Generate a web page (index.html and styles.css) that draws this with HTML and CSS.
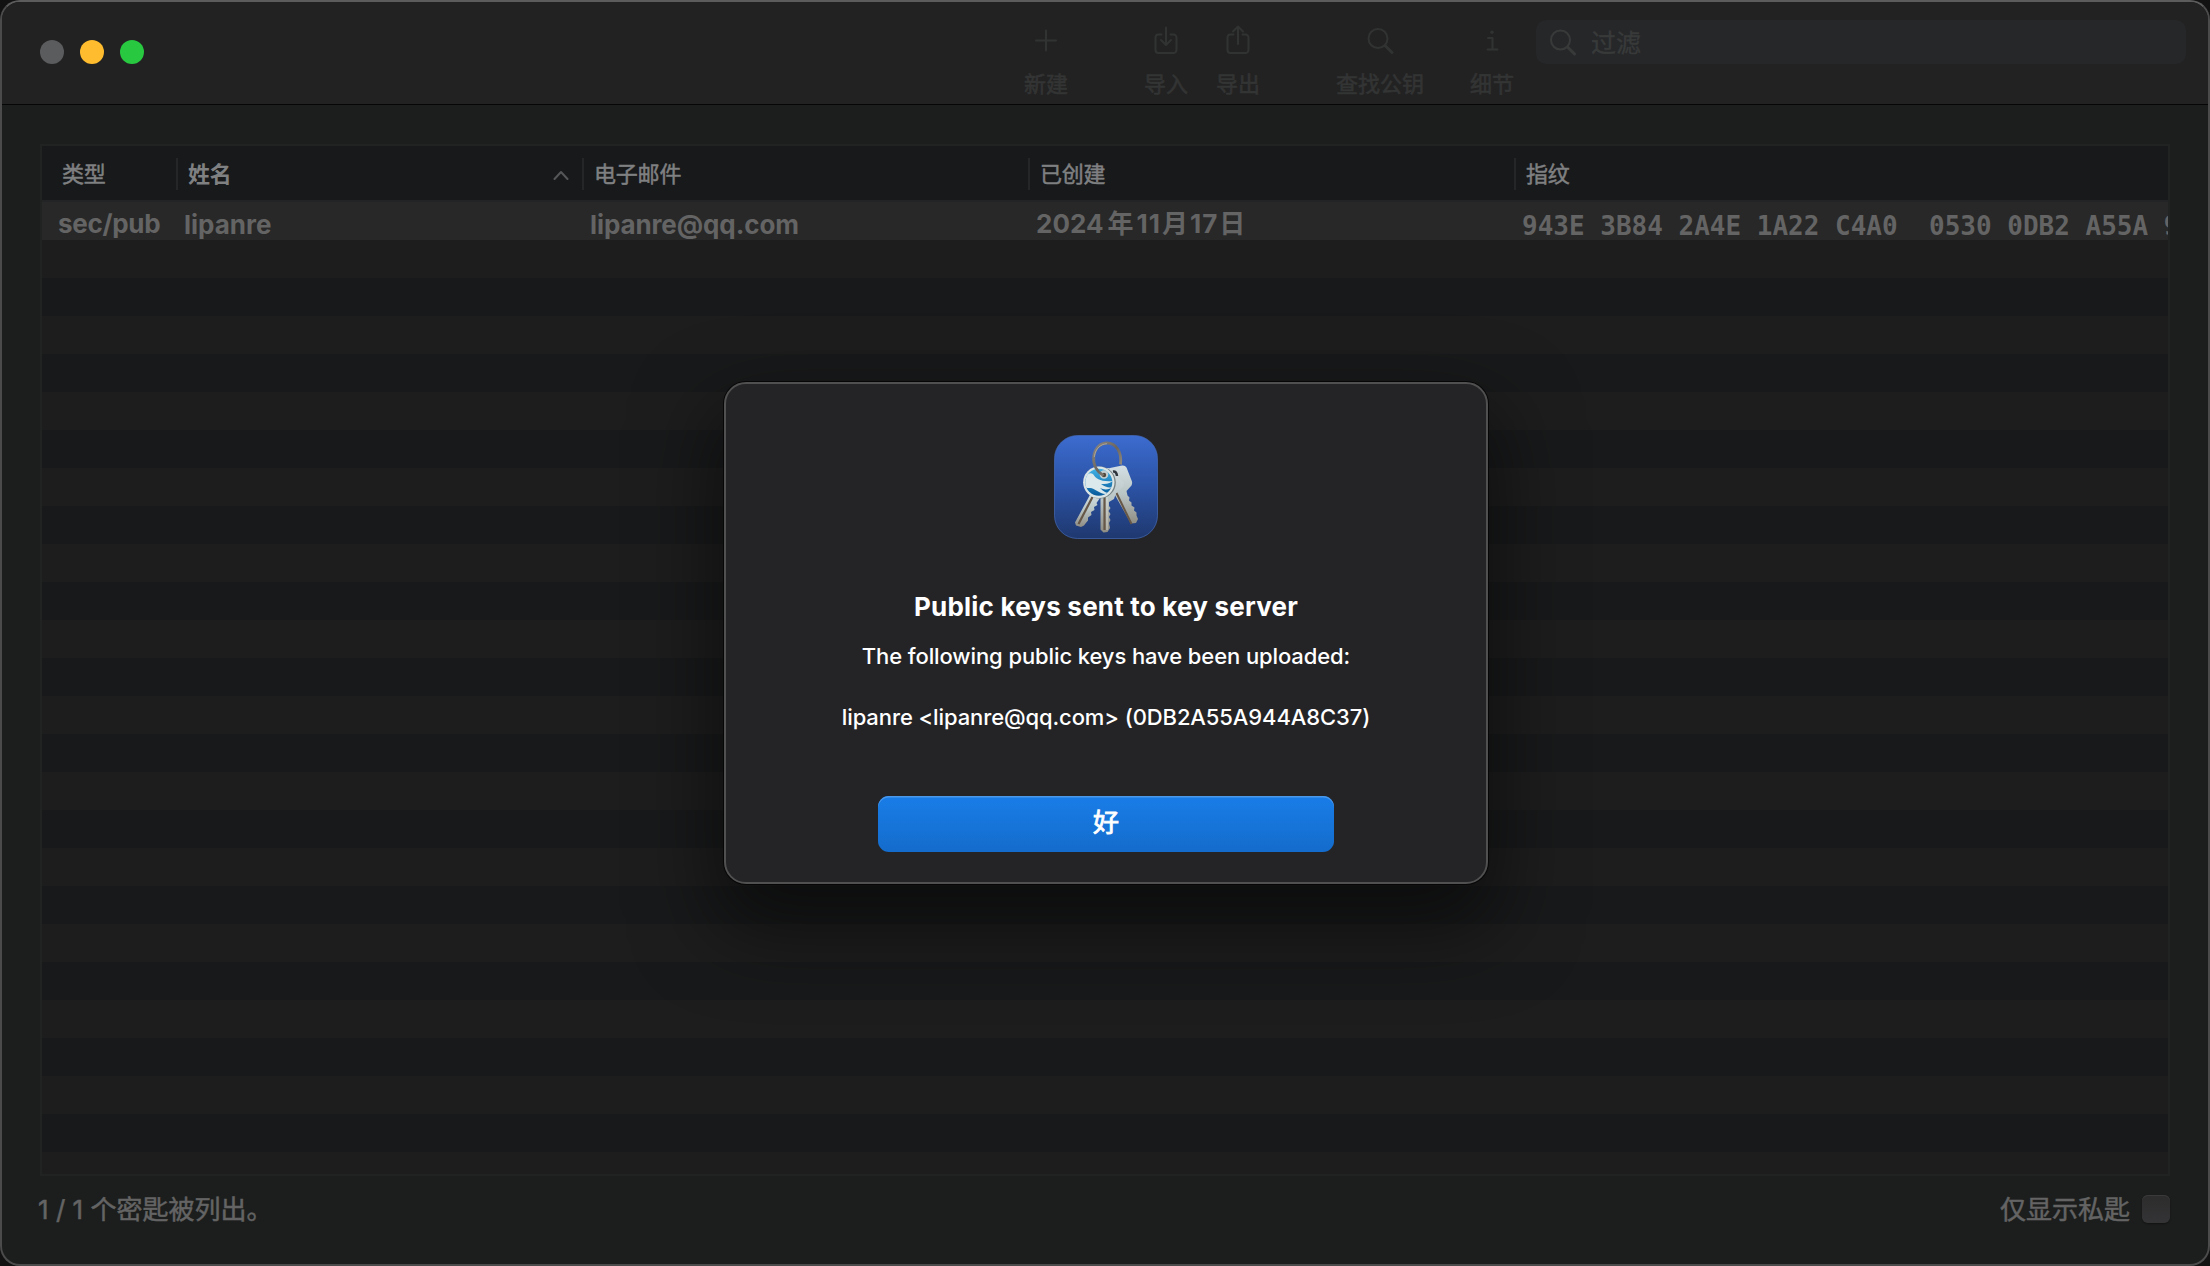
FILE: index.html
```html
<!DOCTYPE html>
<html lang="zh-CN">
<head>
<meta charset="utf-8">
<title>GPG Keychain</title>
<link rel="stylesheet" href="styles.css">
</head>
<body>
<main class="window">
  <header class="titlebar">
    <div class="lights"><i class="light close"></i><i class="light minimise"></i><i class="light zoom"></i></div>
    <nav class="toolbar">
      <div class="tool tool-new">
        <svg class="tool-icon" viewBox="0 0 32 32"><path d="M16 6.500v20M6 16.500h20"/></svg>
        <span class="t">新建</span>
      </div>
      <div class="tool tool-import">
        <svg class="tool-icon" viewBox="0 0 32 32"><path d="M11.500 10.500H8.500a3 3 0 0 0-3 3V26a3 3 0 0 0 3 3h15a3 3 0 0 0 3-3V13.500a3 3 0 0 0-3-3h-3M16 3.500v17M11 16l5 5 5-5"/></svg>
        <span class="t">导入</span>
      </div>
      <div class="tool tool-export">
        <svg class="tool-icon" viewBox="0 0 32 32"><path d="M11.500 10.500H8.500a3 3 0 0 0-3 3V26a3 3 0 0 0 3 3h15a3 3 0 0 0 3-3V13.500a3 3 0 0 0-3-3h-3M16 20V2.500M11 7.500l5-5 5 5"/></svg>
        <span class="t">导出</span>
      </div>
      <div class="tool tool-lookup">
        <svg class="tool-icon" viewBox="0 0 32 32"><circle cx="14" cy="14.500" r="9.500"/><path class="handle" d="M21 21.500l7 7"/></svg>
        <span class="t">查找公钥</span>
      </div>
      <div class="tool tool-info">
        <svg class="tool-icon" viewBox="0 0 32 32"><path d="M12 14h4.500v11.500M11.500 25.500h10"/><circle class="dot" cx="16" cy="8.300" r="1.700"/></svg>
        <span class="t">细节</span>
      </div>
    </nav>
    <div class="search">
      <svg class="search-icon" viewBox="0 0 28 28"><circle cx="11.500" cy="12" r="9.500"/><path class="handle" d="M18.500 19l7 7"/></svg>
      <span class="t">过滤</span>
    </div>
  </header>

  <section class="table">
    <div class="row head">
      <div class="cell"><span class="t">类型</span></div>
      <div class="cell sorted"><span class="t">姓名</span><svg class="chevron" viewBox="0 0 16 10"><path d="M1.500 9L8 2l6.500 7"/></svg></div>
      <div class="cell"><span class="t">电子邮件</span></div>
      <div class="cell"><span class="t">已创建</span></div>
      <div class="cell"><span class="t">指纹</span></div>
    </div>
    <div class="body">
      <div class="row selected">
        <div class="cell type"><span class="t">sec/pub</span></div>
        <div class="cell name"><span class="t">lipanre</span></div>
        <div class="cell mail"><span class="t">lipanre@qq.com</span></div>
        <div class="cell date"><span class="t">2024</span><span class="t year">年</span><span class="t num">11</span><span class="t month">月</span><span class="t num">17</span><span class="t day">日</span></div>
        <div class="cell print"><span class="t">943E 3B84 2A4E 1A22 C4A0  0530 0DB2 A55A 944A 8C37</span></div>
      </div>
    </div>
  </section>

  <footer class="status">
    <span class="t">1 / 1 个密匙被列出。</span>
    <label class="secret"><span class="t">仅显示私匙</span><i class="checkbox"></i></label>
  </footer>
</main>

<div class="dialog" role="alertdialog">
  <svg class="app-icon" viewBox="0 0 104 104">
    <defs>
      <linearGradient id="sky" x1="0" y1="0" x2="0" y2="1"><stop offset="0" stop-color="#3c6cd0"/><stop offset=".5" stop-color="#2b52a4"/><stop offset="1" stop-color="#1f386f"/></linearGradient>
      <linearGradient id="steel" x1="0" y1="0" x2="0" y2="1"><stop offset="0" stop-color="#d3dfe3"/><stop offset=".5" stop-color="#b9c4c4"/><stop offset="1" stop-color="#8f8d83"/></linearGradient>
      <linearGradient id="ring" x1="0" y1="0" x2="1" y2="1"><stop offset="0" stop-color="#8c8780"/><stop offset=".5" stop-color="#6a655f"/><stop offset="1" stop-color="#a39a8c"/></linearGradient>
      <linearGradient id="badge" x1="0" y1="0" x2="0" y2="1"><stop offset="0" stop-color="#3fb2e6"/><stop offset="1" stop-color="#075a9b"/></linearGradient>
      <clipPath id="disc"><circle cx="44.800" cy="47.300" r="13.500"/></clipPath>
    </defs>
    <rect x=".5" y=".5" width="103" height="103" rx="23" fill="url(#sky)" stroke="#456bb9" stroke-opacity=".7"/>
    <path fill="url(#steel)" d="M56 33l12-2.500q3-.5 4.500 2l5.500 14q.5 2-.5 4l-5 5.500 1 4.500 2 2-.5 3 2.500 2 0 3 3 2-.5 3 2.500 2 0 3 1.500 3.500-2 4-5 .5L62 62 56 50z"/>
    <path d="M62.500 58l15 31" stroke="#665747" stroke-width="2" fill="none"/>
    <path fill="url(#steel)" d="M37 58l9 5-3.500 5 1 2-3.500 2 .5 3-3.500 2 .5 3-3.500 2.500 0 3-2.500 3-1.500 2-3 1.500-5-1.500-1-3z"/>
    <path d="M38.500 62L24.500 89" stroke="#665747" stroke-width="2.200" fill="none"/>
    <path fill="url(#steel)" d="M47 34q11-3 16 4l2 5 5 5-1 4-7 6-2 6-5 3 0 4 1.500 2-2 3 2 3-1.500 3 1.500 3-1.500 3 1 5-2.500 4-4 .5-3-3V60z"/>
    <path d="M50.500 62v33" stroke="#665747" stroke-width="2.200" fill="none"/>
    <path d="M53 62v33" stroke="#eee9dd" stroke-width=".7" fill="none"/>
    <path d="M59 36.500q3.500-.5 4 4.500" stroke="#30363e" stroke-width="2.500" fill="none"/>
    <circle cx="45.800" cy="47.500" r="16" fill="#778284"/>
    <circle cx="44.800" cy="47.300" r="15.700" fill="#dbe5e6"/>
    <circle cx="44.800" cy="47.300" r="13.500" fill="url(#badge)"/>
    <g clip-path="url(#disc)" fill="#dbe8ec">
      <path d="M29 43c3-4 7-6 10-4 3 5 8 8 20 7-4 3-8 3-12 3 4 3 8 4 12 3-4 3-9 3-13 1 4 4 6 5 10 5-9 4-14-5-20-5-3 0-5 0-7 2z"/>
    </g>
    <circle cx="50" cy="39.500" r="4.300" fill="#c3ced0"/>
    <circle cx="50" cy="40" r="2.200" fill="#51483e"/>
    <path d="M49.500 40.500C43 37 39 30 39.700 21.500 41 12 47 8 53 8c9 0 15 9 13.500 21.500" fill="none" stroke="url(#ring)" stroke-width="2.800"/>
    <path d="M40.300 22C41.500 13 47 9 53 8.700" fill="none" stroke="#b5aea2" stroke-width=".8"/>
  </svg>
  <h1 class="dialog-title">Public keys sent to key server</h1>
  <p class="dialog-text"><span class="intro">The following public keys have been uploaded:</span><br><br><span class="uploaded">lipanre &lt;lipanre@qq.com&gt; (0DB2A55A944A8C37)</span></p>
  <button class="ok">好</button>
</div>
</body>
</html>
```
FILE: styles.css
```css
* { box-sizing: border-box; }

body {
  margin: 0;
  width: 2210px;
  height: 1266px;
  overflow: hidden;
  position: relative;
  background: #121212;
  color: #646464;
  font-family: Inter, "Noto Sans CJK SC", sans-serif;
  font-size: 26px;
}

i { display: block; }
.t { white-space: pre; }

.window {
  display: flex;
  flex-direction: column;
  width: 2210px;
  height: 1266px;
  border: 2px solid #4b4b4b;
  border-top-color: #5c5c5c;
  border-radius: 20px;
  background: #1c1e1d;
  overflow: hidden;
}

/* Title bar */
.titlebar {
  display: flex;
  flex: none;
  height: 103px;
  padding: 18px 22px 0 38px;
  background: #222222;
  border-bottom: 1px solid #060606;
}
.lights { display: flex; gap: 16px; padding-top: 20px; }
.light { width: 24px; height: 24px; border-radius: 50%; }
.close { background: #5b5c5e; }
.minimise { background: #febc2e; }
.zoom { background: #28c840; }

.toolbar { display: flex; margin-left: auto; color: #333434; font-size: 22px; -webkit-text-stroke: .6px; }
.tool { display: flex; flex-direction: column; align-items: center; padding-top: 4px; line-height: 28px; }
.tool-new, .tool-export { margin-right: 76px; }
.tool-import { margin-right: 28px; }
.tool-lookup { margin-right: 46px; }
.tool-info { margin-right: 22px; }
.tool-icon { width: 32px; height: 32px; margin-bottom: 14px; }
.tool-icon, .search-icon, .chevron { fill: none; stroke: #313232; stroke-width: 2; stroke-linecap: round; stroke-linejoin: round; }
.tool-icon .handle, .search-icon .handle { stroke-width: 3; }
.dot { fill: #313232; stroke: none; }

.search {
  display: flex;
  align-items: center;
  width: 650px;
  height: 44px;
  padding-left: 13px;
  gap: 14px;
  border-radius: 10px;
  background: #262729;
  color: #383a3a;
  font-size: 25px;
  line-height: 44px;
  -webkit-text-stroke: .4px;
}
.search .t { padding-top: 2px; }
.search-icon { width: 28px; height: 28px; stroke: #383a3a; }

/* Key list */
.table {
  flex: none;
  height: 1032px;
  margin: 39px 38px 0;
  border: 2px solid #212322;
  overflow: hidden;
}
.row { display: grid; grid-template-columns: 136px 406px 446px 486px 1fr; }
.head {
  height: 56px;
  padding: 12px 0 10px;
  border-bottom: 2px solid #222425;
  background: #18191a;
  color: #7f8081;
  font-size: 22px;
  letter-spacing: -.2px;
  line-height: 32px;
  -webkit-text-stroke: .5px;
}
.head .cell { display: flex; align-items: center; padding-left: 10px; border-right: 2px solid #252627; }
.head .cell:first-child { padding-left: 20px; }
.head .cell:last-child { border: 0; }
.head .sorted { font-weight: 700; -webkit-text-stroke: 0; }
.chevron { width: 16px; height: 10px; margin: 2px 13px 0 auto; stroke: #555657; }

.body { height: 972px; background: repeating-linear-gradient(#18191a 0 38px, #1d1d1d 38px 76px); }
.selected { height: 38px; background: #282828; color: #646464; font-weight: 700; line-height: 38px; }
.selected .cell { white-space: nowrap; overflow: hidden; padding-left: 6px; padding-top: 3px; }
.selected .type { padding-left: 16px; letter-spacing: -.3px; }
.selected .name, .selected .mail { padding-top: 4px; }
.selected .mail { letter-spacing: -.1px; }
.selected .print { padding-top: 5px; font-family: "DejaVu Sans Mono", monospace; }
.year { margin: 0 3px 0 4px; }
.num { letter-spacing: 1px; }
.month { margin: 0 2px 0 1px; }
.day { margin-left: 1px; }

/* Status line */
.status { display: flex; justify-content: space-between; padding: 14px 38px 0 36px; line-height: 40px; -webkit-text-stroke: .5px; }
.secret { display: flex; align-items: center; gap: 12px; }
.checkbox {
  width: 28px;
  height: 28px;
  margin-bottom: 2px;
  border-radius: 6px;
  background: linear-gradient(#2c2c2d, #343436);
  box-shadow: inset 0 1px #3a3a3a, 0 1px 2px rgba(0, 0, 0, .4);
}

/* Alert */
.dialog {
  position: absolute;
  left: 724px;
  top: 382px;
  display: flex;
  flex-direction: column;
  align-items: center;
  width: 764px;
  height: 502px;
  padding-top: 51px;
  border: 2px solid #505051;
  border-radius: 22px;
  background: #242426;
  box-shadow: 0 0 0 1px #060606, 0 36px 80px 10px rgba(0, 0, 0, .5);
  color: #fff;
}
.app-icon { width: 104px; height: 104px; }
.dialog-title { margin: 52px 0 18px; font-size: 26px; font-weight: 700; letter-spacing: .21px; line-height: 32px; }
.dialog-text { margin: 0 0 63.5px; font-size: 22px; font-weight: 500; letter-spacing: -.1px; line-height: 30.5px; text-align: center; }
.ok {
  width: 456px;
  height: 56px;
  padding: 0 0 2px;
  border: 0;
  border-radius: 11px;
  background: linear-gradient(#197de8, #146ccc);
  box-shadow: inset 0 1.5px #4b98ea;
  color: #fff;
  font: 26px/54px Inter, "Noto Sans CJK SC", sans-serif;
  -webkit-text-stroke: .8px;
}
```
